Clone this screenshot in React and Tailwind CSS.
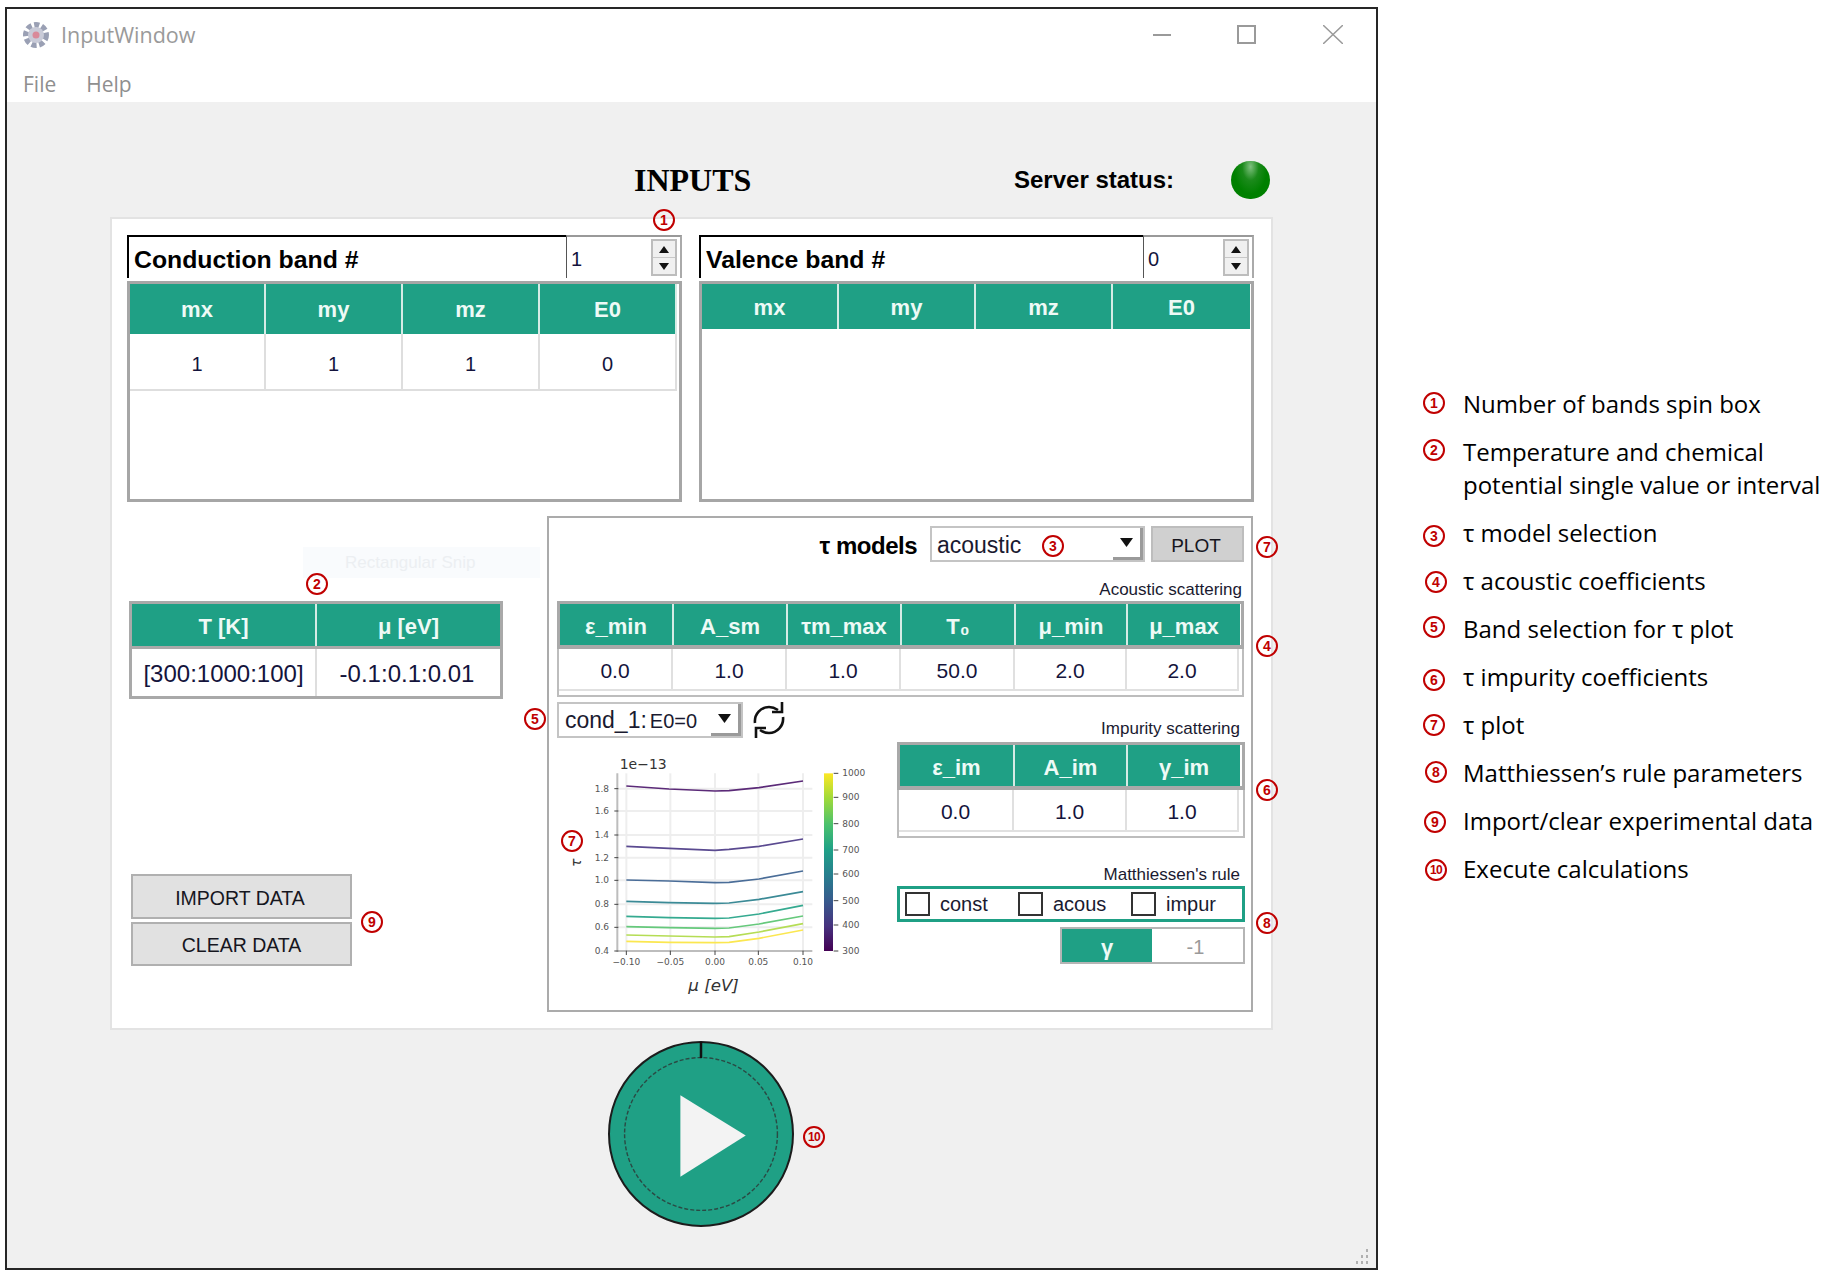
const SANS = "font-['Liberation_Sans',Arial,sans-serif]"

function Badge({ n, className = '' }) {
  return (
    <span
      className={`absolute flex h-[22px] w-[22px] -translate-x-1/2 -translate-y-1/2 items-center justify-center rounded-full border-2 border-[#c00000] font-['Liberation_Sans',sans-serif] font-bold leading-none text-[#c00000] ${n === 10 ? 'text-[12px] tracking-tighter' : 'text-[14px]'} ${className}`}
    >
      {n}
    </span>
  )
}

function SpinBox({ value, width }) {
  return (
    <div className={`flex ${width} items-center border-l border-r-2 border-t-2 border-l-[#555] border-r-[#aaa] border-t-[#999] pl-[4px] pr-[3px]`}>
      <span className="pt-[3px] text-[20px] text-[#14143c]">{value}</span>
      <div className="ml-auto flex h-[37px] w-[26px] flex-col border-2 border-[#bdbdbd] bg-[#f0f0f0]">
        <div className="flex flex-1 items-center justify-center border-b border-[#c8c8c8]">
          <svg width="10" height="7" viewBox="0 0 10 7"><path d="M5 0 10 7H0z" fill="#111" /></svg>
        </div>
        <div className="flex flex-1 items-center justify-center">
          <svg width="10" height="7" viewBox="0 0 10 7"><path d="M0 0h10L5 7z" fill="#111" /></svg>
        </div>
      </div>
    </div>
  )
}

function BandBox({ title, value, spinWidth, cols, headerHeight, rows }) {
  return (
    <div className="flex w-[555px] flex-col">
      <div className="flex h-[43px]">
        <div className="flex flex-1 items-center border-l-2 border-t-2 border-black pl-[5px] pt-[5px] text-[24.8px] font-bold leading-none text-black">
          {title}
        </div>
        <SpinBox value={value} width={spinWidth} />
      </div>
      <div className="mt-[3px] h-[221px] border-[3px] border-[#a6a6a6] bg-white">
        <div className={`grid ${cols}`}>
          {['mx', 'my', 'mz', 'E0'].map((h) => (
            <div
              key={h}
              className={`flex ${headerHeight} items-center justify-center border-r-2 border-[#d5ebe5] bg-[#1fa085] text-[22px] font-bold text-[#eefaf6] last:border-r-0`}
            >
              {h}
            </div>
          ))}
          {rows.map((v, i) => (
            <div
              key={i}
              className="flex h-[57px] items-center justify-center border-b-2 border-r-2 border-[#dedede] pt-[5px] text-[20px] text-[#14143c]"
            >
              {v}
            </div>
          ))}
        </div>
      </div>
    </div>
  )
}

function ParamTable({ width, cols, headers, values }) {
  return (
    <div className={`${width} flex h-[96px] flex-col`}>
      <div className={`grid ${cols} h-[48px] border-x-[3px] border-b-[4px] border-t-[3px] border-[#a9a9a9]`}>
        {headers.map((h) => (
          <div
            key={h}
            className="flex items-center justify-center border-r-2 border-[#d5ebe5] bg-[#1fa085] pt-[3px] text-[22px] font-bold text-[#eefaf6] last:border-r-0"
          >
            {h}
          </div>
        ))}
      </div>
      <div className="flex-1 border-x-2 border-b-2 border-[#bdbdbd] bg-white">
        <div className={`grid ${cols}`}>
          {values.map((v, i) => (
            <div
              key={i}
              className="flex h-[42px] items-center justify-center border-b-2 border-r-2 border-[#e0e0e0] pt-[3px] text-[21px] text-[#14143c]"
            >
              {v}
            </div>
          ))}
        </div>
      </div>
    </div>
  )
}

function ComboArrow() {
  return (
    <div className="ml-auto flex w-[30px] items-center justify-center self-stretch border-b-[3px] border-r-[3px] border-[#9a9a9a]">
      <svg width="13" height="9" viewBox="0 0 13 9"><path d="M0 0h13L6.5 9z" fill="#111" /></svg>
    </div>
  )
}

const CURVES = [
  { color: '#5b2a78', y: [168, 177, 183, 182, 173, 153] },
  { color: '#5a4a90', y: [349, 355, 361, 358, 349, 327] },
  { color: '#4a6d98', y: [450, 453, 458, 457, 447, 423] },
  { color: '#3b8a96', y: [514, 518, 520, 519, 508, 485] },
  { color: '#35aa90', y: [559, 563, 565, 564, 552, 526] },
  { color: '#66c97c', y: [590, 593, 595, 594, 582, 558] },
  { color: '#b5dd55', y: [615, 618, 621, 620, 606, 581] },
  { color: '#fbe750', y: [634, 637, 638, 637, 625, 600] },
]
const CURVE_X = [292, 420, 558, 600, 690, 822]
const Y_TICKS = [
  ['1.8', 176], ['1.6', 243], ['1.4', 315], ['1.2', 383],
  ['1.0', 451], ['0.8', 523], ['0.6', 592], ['0.4', 663],
]
const X_TICKS = [['−0.10', 292], ['−0.05', 424], ['0.00', 558], ['0.05', 688], ['0.10', 822]]
const BAR_TICKS = [
  ['1000', 130], ['900', 202], ['800', 281], ['700', 360],
  ['600', 432], ['500', 512], ['400', 585], ['300', 663],
]

// coordinates are in 3x units of the chart crop, hence the viewBox
function TauPlot() {
  return (
    <svg viewBox="90 30 960 780" className="ml-[2px] mt-px h-[260px] w-[320px] font-['DejaVu_Sans',sans-serif]">
      <defs>
        <linearGradient id="viridis" x1="0" y1="1" x2="0" y2="0">
          <stop offset="0" stopColor="#440154" />
          <stop offset="0.14" stopColor="#46327e" />
          <stop offset="0.29" stopColor="#365c8d" />
          <stop offset="0.43" stopColor="#277f8e" />
          <stop offset="0.57" stopColor="#1fa187" />
          <stop offset="0.71" stopColor="#4ac16d" />
          <stop offset="0.86" stopColor="#a0da39" />
          <stop offset="1" stopColor="#fde725" />
        </linearGradient>
      </defs>
      {Y_TICKS.slice(0, 7).map(([l, y]) => (
        <line key={l} x1="265" x2="850" y1={y} y2={y} stroke="#eeeeee" strokeWidth="6" />
      ))}
      {X_TICKS.map(([l, x]) => (
        <line key={l} x1={x} x2={x} y1="130" y2="663" stroke="#eeeeee" strokeWidth="6" />
      ))}
      <path d="M265 130V663H850" fill="none" stroke="#bdbdbd" strokeWidth="6" />
      {CURVES.map((c) => (
        <polyline
          key={c.color}
          points={c.y.map((y, i) => `${CURVE_X[i]},${y}`).join(' ')}
          fill="none"
          stroke={c.color}
          strokeWidth="5"
        />
      ))}
      {Y_TICKS.map(([l, y]) => (
        <g key={l}>
          <line x1="256" x2="268" y1={y} y2={y} stroke="#444" strokeWidth="3" />
          <text x="240" y={y + 9} textAnchor="end" fontSize="27" fill="#555">{l}</text>
        </g>
      ))}
      {X_TICKS.map(([l, x]) => (
        <g key={l}>
          <line x1={x} x2={x} y1="662" y2="675" stroke="#444" strokeWidth="3" />
          <text x={x} y="706" textAnchor="middle" fontSize="27" fill="#555">{l}</text>
        </g>
      ))}
      <rect x="885" y="130" width="27" height="533" fill="url(#viridis)" />
      {BAR_TICKS.map(([l, y]) => (
        <g key={l}>
          <line x1="914" x2="928" y1={y} y2={y} stroke="#444" strokeWidth="3" />
          <text x="940" y={y + 9} fontSize="27" fill="#555">{l}</text>
        </g>
      ))}
      <text x="272" y="118" fontSize="42" fill="#333">1e−13</text>
      <text x="478" y="782" fontSize="50" fontStyle="italic" fill="#333">μ [eV]</text>
      <text transform="translate(155 398) rotate(-90)" textAnchor="middle" fontSize="42" fontStyle="italic" fill="#333">τ</text>
    </svg>
  )
}

function RefreshIcon() {
  return (
    <svg width="36" height="38" viewBox="0 0 36 38" fill="none" stroke="#111" strokeWidth="2.6" className="ml-[8px] shrink-0">
      <path d="M4 22C3 13 10 6 18 6c3 0 6 1 9 3" />
      <path d="M32 16c1 9-6 16-14 16-3 0-6-1-9-3" />
      <path d="M31 1v10H21" />
      <path d="M5 37V27h10" />
    </svg>
  )
}

function Check({ label, width }) {
  return (
    <div className={`flex ${width} items-center`}>
      <span className="h-[24px] w-[25px] border-2 border-[#333] bg-white" />
      <span className="ml-[10px] text-[20px] text-[#1a1a30]">{label}</span>
    </div>
  )
}

function WindowIcon() {
  return (
    <svg width="28" height="30" viewBox="0 0 28 30" className="blur-[0.6px]">
      <circle cx="14" cy="15" r="10" fill="none" stroke="#9aa0b4" strokeWidth="6" strokeDasharray="5 2.5" />
      <circle cx="14" cy="15" r="8" fill="#c9cbd8" />
      <circle cx="14" cy="15" r="3.5" fill="#d98a9a" />
    </svg>
  )
}

function PlayButton() {
  return (
    <svg width="186" height="186" viewBox="0 0 185 185" className="ml-[601px] mt-[11px]">
      <circle cx="92.5" cy="92.5" r="91.5" fill="#1fa085" stroke="#1c1c1c" strokeWidth="2" />
      <circle cx="92.5" cy="92.5" r="76" fill="none" stroke="#2a4a44" strokeWidth="1.4" strokeDasharray="4 2" />
      <line x1="92.5" y1="1" x2="92.5" y2="17" stroke="#111" strokeWidth="2.5" />
      <path d="M72 54 137 94 72 135z" fill="#f3f3f3" />
    </svg>
  )
}

const LEGEND = [
  [1, <>Number of bands spin box</>, 'mt-[5px]'],
  [2, <>Temperature and chemical<br />potential single value or interval</>, 'mt-[4px]'],
  [3, <>τ model selection</>, 'mt-[9px]'],
  [4, <>τ acoustic coefficients</>, 'mt-[7px] ml-[2px]'],
  [5, <>Band selection for τ plot</>, 'mt-[4px]'],
  [6, <>τ impurity coefficients</>, 'mt-[9px]'],
  [7, <>τ plot</>, 'mt-[6px]'],
  [8, <>Matthiessen’s rule parameters</>, 'mt-[5px] ml-[2px]'],
  [9, <>Import/clear experimental data</>, 'mt-[7px] ml-[1px]'],
  [10, <>Execute calculations</>, 'mt-[7px] ml-[2px]'],
]

export default function App() {
  return (
    <div className={`relative flex h-[1278px] w-[1834px] items-start overflow-hidden bg-white ${SANS}`}>
      <div className="relative ml-[5px] mt-[7px] flex h-[1263px] w-[1373px] shrink-0 flex-col border-2 border-[#262626] bg-white">
        <div className="flex h-[51px] items-center pl-[15px] pr-[33px]">
          <WindowIcon />
          <span className="ml-[11px] pt-[2px] font-['Open_Sans',sans-serif] text-[21.5px] text-[#9a9a9a]">InputWindow</span>
          <div className="ml-auto flex items-center">
            <span className="h-[2px] w-[18px] bg-[#9a9a9a]" />
            <span className="ml-[66px] h-[19px] w-[19px] border-2 border-[#9a9a9a]" />
            <svg width="20" height="19" viewBox="0 0 20 19" className="ml-[67px]" stroke="#9a9a9a" strokeWidth="1.5">
              <path d="M0 0 20 19M20 0 0 19" />
            </svg>
          </div>
        </div>
        <div className="flex h-[42px] items-center pl-[16px] pt-[7px] font-['Open_Sans',sans-serif] text-[21px] text-[#8f8f8f]">
          <span>File</span>
          <span className="ml-[30px]">Help</span>
        </div>

        <div className="flex-1 bg-[#f0f0f0]">
          <div className="flex h-[115px] items-center pl-[627px] pt-[41px]">
            <span className="w-[118px] whitespace-nowrap font-['Liberation_Serif',serif] text-[32px] font-bold leading-none text-black">INPUTS</span>
            <span className="ml-[262px] w-[161px] whitespace-nowrap text-[24px] font-bold leading-none text-black">Server status:</span>
            <span className="relative ml-[56px] h-[38px] w-[39px] rounded-full bg-[radial-gradient(ellipse_at_50%_15%,#7fc07f_0%,#1b8a1b_30%,#008000_60%)]" />
          </div>

          <div className="ml-[103px] h-[813px] w-[1163px] border-2 border-[#e3e3e3] bg-white pl-[15px] pt-[16px]">
            <div className="flex gap-[17px]">
              <BandBox
                title="Conduction band #"
                value="1"
                spinWidth="w-[116px]"
                cols="grid-cols-[136px_137px_137px_137px]"
                headerHeight="h-[50px]"
                rows={['1', '1', '1', '0']}
              />
              <BandBox
                title="Valence band #"
                value="0"
                spinWidth="w-[111px]"
                cols="grid-cols-[137px_137px_137px_137px]"
                headerHeight="h-[45px] pt-[2px]"
                rows={[]}
              />
            </div>

            <div className="mt-[14px] flex">
              <div className="flex w-[420px] flex-col pl-[2px] pt-[85px]">
                <div className="h-[98px] w-[374px] border-[3px] border-[#a9a9a9] bg-white">
                  <div className="grid h-[45px] grid-cols-[185px_183px] border-b-[3px] border-[#a9a9a9]">
                    <div className="flex items-center justify-center border-r-2 border-[#d5ebe5] bg-[#1fa085] pt-[3px] text-[22px] font-bold text-[#eefaf6]">T [K]</div>
                    <div className="flex items-center justify-center bg-[#1fa085] pt-[3px] text-[22px] font-bold text-[#eefaf6]">μ [eV]</div>
                  </div>
                  <div className="grid h-[47px] grid-cols-[185px_183px]">
                    <div className="flex items-center justify-center border-r-2 border-[#dedede] pt-[3px] text-[24px] text-[#14143c]">[300:1000:100]</div>
                    <div className="flex items-center justify-center pr-[3px] pt-[3px] text-[24px] text-[#14143c]">-0.1:0.1:0.01</div>
                  </div>
                </div>
                <div className="ml-[2px] mt-[175px] flex h-[45px] w-[221px] items-center justify-center border-2 border-[#b0b0b0] bg-[#e1e1e1] pr-[3px] pt-[4px] text-[19.5px] text-[#16161e]">IMPORT DATA</div>
                <div className="ml-[2px] mt-[3px] flex h-[44px] w-[221px] items-center justify-center border-2 border-[#b0b0b0] bg-[#e1e1e1] pt-[4px] text-[19.5px] text-[#16161e]">CLEAR DATA</div>
              </div>

              <div className="h-[496px] w-[706px] border-2 border-[#ababab] bg-white pl-[8px] pt-[8px]">
                <div className="flex h-[36px] items-center justify-end pr-[7px]">
                  <span className="pt-[3px] text-[24px] font-bold leading-none tracking-[-0.5px] text-black">τ models</span>
                  <div className="ml-[13px] flex h-[36px] w-[215px] items-center border-2 border-[#c4c4c4] pl-[5px] text-[23px] text-[#1a1a30]">
                    <span className="pt-[3px]">acoustic</span>
                    <ComboArrow />
                  </div>
                  <div className="ml-[6px] flex h-[36px] w-[93px] items-center justify-center border-2 border-[#bdbdbd] bg-[#d0d0d0] pr-[3px] pt-[4px] text-[19px] text-[#16161e]">PLOT</div>
                </div>
                <div className="mt-[16px] flex h-[22px] items-center justify-end overflow-hidden pr-[9px] text-[17px] leading-none text-[#1a1a30]">Acoustic scattering</div>
                <div className="mt-px">
                  <ParamTable
                    width="w-[687px]"
                    cols="grid-cols-[114px_114px_114px_114px_112px_112px]"
                    headers={['ε_min', 'A_sm', 'τm_max', 'T₀', 'μ_min', 'μ_max']}
                    values={['0.0', '1.0', '1.0', '50.0', '2.0', '2.0']}
                  />
                </div>

                <div className="mt-[4px] flex">
                  <div className="w-[340px]">
                    <div className="flex items-center">
                      <div className="flex h-[36px] w-[186px] items-center border-2 border-[#c4c4c4] pl-[6px] text-[#1a1a30]">
                        <span className="pt-px text-[23px]">cond_1:</span>
                        <span className="ml-[3px] pt-px text-[20px]">E0=0</span>
                        <ComboArrow />
                      </div>
                      <RefreshIcon />
                    </div>
                    <TauPlot />
                  </div>

                  <div className="w-[348px]">
                    <div className="flex h-[41px] justify-end whitespace-nowrap pr-[5px] pt-[19px] text-[17px] leading-none text-[#1a1a30]">
                      Impurity scattering
                    </div>
                    <ParamTable
                      width="w-[348px]"
                      cols="grid-cols-[115px_113px_112px]"
                      headers={['ε_im', 'A_im', 'γ_im']}
                      values={['0.0', '1.0', '1.0']}
                    />
                    <div className="flex h-[48px] justify-end whitespace-nowrap pr-[5px] pt-[28px] text-[17px] leading-none text-[#1a1a30]">
                      Matthiessen's rule
                    </div>
                    <div className="flex h-[36px] items-center border-[3px] border-[#1fa085] pl-[5px]">
                      <Check label="const" width="w-[113px]" />
                      <Check label="acous" width="w-[113px]" />
                      <Check label="impur" width="w-[100px]" />
                    </div>
                    <div className="ml-auto mt-[5px] flex h-[37px] w-[185px] border-2 border-[#b5b5b5]">
                      <div className="flex w-[90px] items-center justify-center bg-[#1fa085] pt-[3px] text-[22px] font-bold text-[#eefaf6]">γ</div>
                      <div className="flex flex-1 items-center justify-center bg-white pr-[4px] pt-[3px] text-[20px] text-[#9a9a9a]">-1</div>
                    </div>
                  </div>
                </div>
              </div>
            </div>
          </div>

          <PlayButton />
        </div>

        <svg width="18" height="16" viewBox="0 0 18 16" className="absolute bottom-[3px] right-[5px]" fill="#b0b0b0">
          <rect x="13" y="0" width="2" height="3" />
          <rect x="8" y="6" width="2" height="3" />
          <rect x="13" y="6" width="2" height="3" />
          <rect x="3" y="12" width="2" height="3" />
          <rect x="8" y="12" width="2" height="3" />
          <rect x="13" y="12" width="2" height="3" />
        </svg>
      </div>

      <ol className="ml-[45px] mt-[387px] flex flex-col gap-[15px] font-['Open_Sans',sans-serif] text-[24px] leading-[33px] text-black">
        {LEGEND.map(([n, text, offset]) => (
          <li key={n} className="flex">
            <span className="w-[40px] shrink-0">
              <span className={`relative block h-[22px] w-[22px] ${offset}`}>
                <Badge n={n} className="left-[11px] top-[11px]" />
              </span>
            </span>
            <span className="whitespace-nowrap">{text}</span>
          </li>
        ))}
      </ol>

      {/* faint snipping tool ghost left in the capture */}
      <div className="absolute left-[303px] top-[547px] flex h-[31px] w-[237px] items-center bg-[#f9fbfd] pl-[42px] text-[17px] text-[#eceff2]">Rectangular Snip</div>

      <Badge n={1} className="left-[664px] top-[220px]" />
      <Badge n={2} className="left-[317px] top-[584px]" />
      <Badge n={3} className="left-[1053px] top-[546px]" />
      <Badge n={4} className="left-[1267px] top-[646px]" />
      <Badge n={5} className="left-[535px] top-[719px]" />
      <Badge n={6} className="left-[1267px] top-[790px]" />
      <Badge n={7} className="left-[1267px] top-[547px]" />
      <Badge n={7} className="left-[572px] top-[841px]" />
      <Badge n={8} className="left-[1267px] top-[923px]" />
      <Badge n={9} className="left-[372px] top-[922px]" />
      <Badge n={10} className="left-[814px] top-[1137px]" />
    </div>
  )
}
